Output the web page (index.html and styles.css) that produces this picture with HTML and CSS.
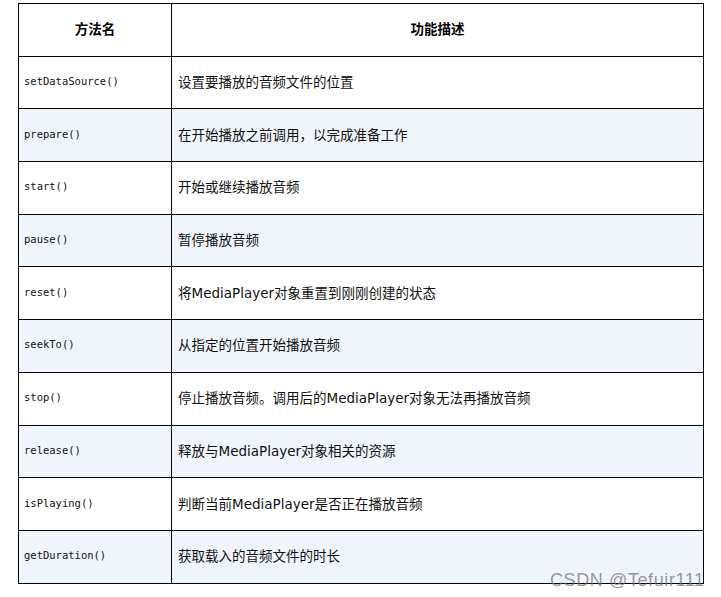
FILE: index.html
```html
<!DOCTYPE html>
<html lang="zh">
<head>
<meta charset="utf-8">
<link rel="stylesheet" href="styles.css">
</head>
<body>
<div class="wrap">
<table class="api">
  <colgroup><col class="c1"><col class="c2"></colgroup>
  <thead>
    <tr><th>方法名</th><th>功能描述</th></tr>
  </thead>
  <tbody>
    <tr><td class="m">setDataSource()</td><td class="d">设置要播放的音频文件的位置</td></tr>
    <tr class="alt"><td class="m">prepare()</td><td class="d">在开始播放之前调用，以完成准备工作</td></tr>
    <tr><td class="m">start()</td><td class="d">开始或继续播放音频</td></tr>
    <tr class="alt"><td class="m">pause()</td><td class="d">暂停播放音频</td></tr>
    <tr><td class="m">reset()</td><td class="d">将MediaPlayer对象重置到刚刚创建的状态</td></tr>
    <tr class="alt"><td class="m">seekTo()</td><td class="d">从指定的位置开始播放音频</td></tr>
    <tr><td class="m">stop()</td><td class="d">停止播放音频。调用后的MediaPlayer对象无法再播放音频</td></tr>
    <tr class="alt"><td class="m">release()</td><td class="d">释放与MediaPlayer对象相关的资源</td></tr>
    <tr><td class="m">isPlaying()</td><td class="d">判断当前MediaPlayer是否正在播放音频</td></tr>
    <tr class="alt"><td class="m">getDuration()</td><td class="d">获取载入的音频文件的时长</td></tr>
  </tbody>
</table>
<div class="watermark">CSDN @Tefuir111</div>
</div>
</body>
</html>
```
FILE: styles.css
```css
html, body {
  margin: 0;
  padding: 0;
  background: #ffffff;
}
.wrap {
  position: relative;
  width: 721px;
  height: 597px;
  padding: 3px 0 0 18px;
  box-sizing: border-box;
}
.api {
  border-collapse: collapse;
  table-layout: fixed;
  width: 685px;
  font-family: "DejaVu Sans", "Noto Sans CJK SC", sans-serif;
  color: #111;
}
.c1 { width: 153px; }
.c2 { width: 532px; }
.api th, .api td {
  border: 1px solid #000;
  height: 48.7px;
  padding: 0 0 3px 0;
  vertical-align: middle;
}
.api th {
  font-family: "Noto Sans CJK SC", sans-serif;
  font-weight: bold;
  font-size: 13.5px;
  color: #000;
  text-align: center;
}
.api td.m {
  font-family: "DejaVu Sans Mono", monospace;
  font-size: 10.5px;
  padding-left: 5px;
  color: #111;
}
.api td.d {
  font-size: 13.5px;
  padding-left: 6px;
}
.api tr.alt td {
  background: #f0f5fc;
}
.watermark {
  position: absolute;
  left: 550px;
  top: 569px;
  font-family: "Liberation Sans", Arial, sans-serif;
  font-size: 18px;
  letter-spacing: 0.6px;
  line-height: 22px;
  color: rgba(120, 120, 120, 0.75);
  white-space: nowrap;
}
```
